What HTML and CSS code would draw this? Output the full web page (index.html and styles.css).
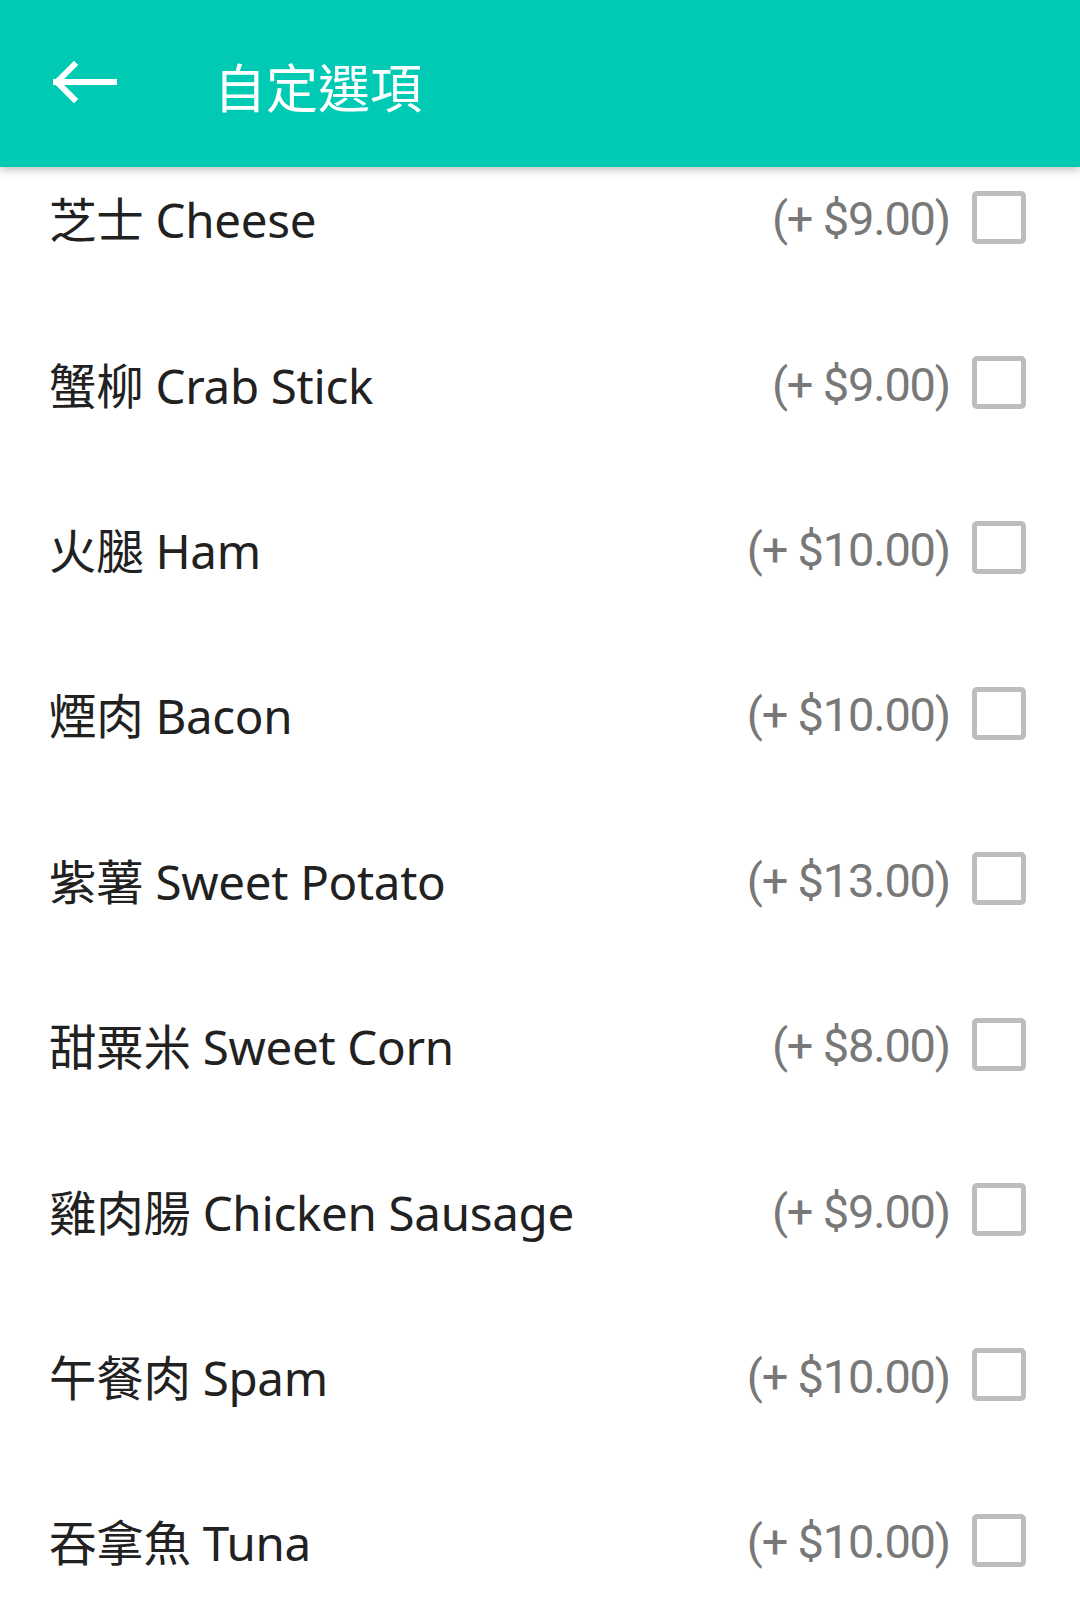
FILE: index.html
```html
<!DOCTYPE html>
<html lang="zh-Hant">
<head>
  <meta charset="UTF-8" />
  <meta name="viewport" content="width=device-width, initial-scale=1.0"/>
  <title>自定選項</title>
  <link rel="stylesheet" href="styles.css">
</head>
<body>

  <header class="topbar">
    <button class="back-btn" aria-label="Back">
      <svg width="66" height="42" viewBox="0 0 66 42">
        <path d="M5 21 H63 M23 4 L6 21 L23 38" fill="none" stroke="#fff" stroke-width="6" stroke-linecap="square"/>
      </svg>
    </button>
    <h1 class="title">自定選項</h1>
  </header>

  <ul class="options">
    <li class="option">
      <span class="name">芝士 Cheese</span>
      <span class="price">(+ $9.00)</span>
      <span class="check"></span>
    </li>
    <li class="option">
      <span class="name">蟹柳 Crab Stick</span>
      <span class="price">(+ $9.00)</span>
      <span class="check"></span>
    </li>
    <li class="option">
      <span class="name">火腿 Ham</span>
      <span class="price">(+ $10.00)</span>
      <span class="check"></span>
    </li>
    <li class="option">
      <span class="name">煙肉 Bacon</span>
      <span class="price">(+ $10.00)</span>
      <span class="check"></span>
    </li>
    <li class="option">
      <span class="name">紫薯 Sweet Potato</span>
      <span class="price">(+ $13.00)</span>
      <span class="check"></span>
    </li>
    <li class="option">
      <span class="name">甜粟米 Sweet Corn</span>
      <span class="price">(+ $8.00)</span>
      <span class="check"></span>
    </li>
    <li class="option">
      <span class="name">雞肉腸 Chicken Sausage</span>
      <span class="price">(+ $9.00)</span>
      <span class="check"></span>
    </li>
    <li class="option">
      <span class="name">午餐肉 Spam</span>
      <span class="price">(+ $10.00)</span>
      <span class="check"></span>
    </li>
    <li class="option">
      <span class="name">吞拿魚 Tuna</span>
      <span class="price">(+ $10.00)</span>
      <span class="check"></span>
    </li>
  </ul>

</body>
</html>
```

FILE: styles.css
```css
:root {
  --teal: #00cab4;
  --text: #212121;
  --muted: #787878;
  --box: #bdbdbd;
}
body {
  margin: 0;
  padding: 0;
  background: #fff;
  font-family: "Noto Sans", "Noto Sans CJK TC", sans-serif;
  overflow: hidden;
}
.topbar {
  position: sticky;
  top: 0;
  z-index: 2;
  height: 167px;
  display: flex;
  align-items: center;
  background: var(--teal);
  box-shadow: 0 3px 8px rgba(0,0,0,0.25);
}
.back-btn {
  background: none;
  border: none;
  padding: 0;
  margin: -4px 0 0 51px;
  width: 66px;
  height: 42px;
  cursor: pointer;
}
.back-btn svg {
  display: block;
}
.title {
  margin: 4px 0 0 97px;
  color: #fff;
  font-family: "Noto Sans CJK TC", sans-serif;
  font-size: 52px;
  font-weight: 400;
}
.options {
  list-style: none;
  margin: -31px 0 0;
  padding: 0;
}
.option {
  height: 165.4px;
  display: flex;
  align-items: center;
  padding: 0 54px 0 49px;
}
.name {
  flex: 1;
  color: var(--text);
  font-size: 47.5px;
  letter-spacing: -0.3px;
  margin-top: -2px;
}
.price {
  color: var(--muted);
  font-family: Roboto, sans-serif;
  font-size: 47px;
  letter-spacing: -1.2px;
  margin-right: 22px;
}
.check {
  width: 44px;
  height: 43px;
  border: 5px solid var(--box);
  border-radius: 5px;
  margin-top: -3px;
}
```
